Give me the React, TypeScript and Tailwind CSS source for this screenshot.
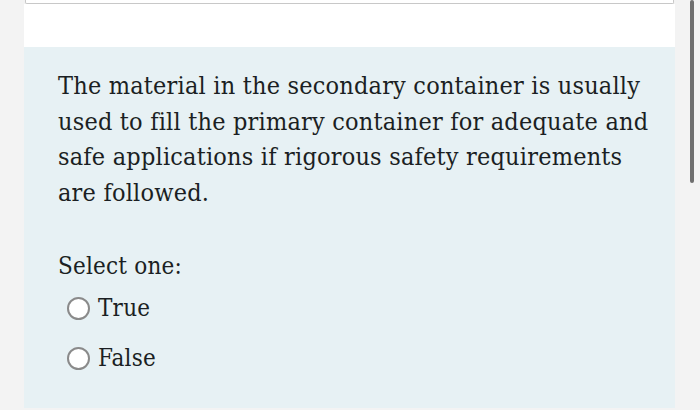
import React from "react";

export default function App() {
  const font = { fontFamily: '"DejaVu Serif Condensed", "DejaVu Serif", serif' };
  return (
    <div className="relative w-[700px] h-[410px] overflow-hidden bg-[#f3f3f3]" style={font}>
      <div className="ml-[24px] w-[651px] flex flex-col h-[408px]">
        <div className="h-[4px] mx-[1px] border border-t-0 border-[#c8c8c8] bg-white rounded-b-[2px]" />
        <div className="h-[43px] bg-white" />
        <div className="flex-1 bg-[#e7f1f4] pl-[34px] pr-[10px] pt-[21px] text-[#1b1f23]">
          <p className="text-[25px] leading-[35.5px] tracking-[0.2px]">
            The material in the secondary container is usually used to fill the primary container for adequate and safe applications if rigorous safety requirements are followed.
          </p>
          <p className="mt-[38px] text-[24px] leading-[36px] tracking-[0.2px]">Select one:</p>
          <div className="mt-[6px] flex flex-col gap-[14px] pl-[9px]">
            {["True", "False"].map((t) => (
              <label key={t} className="flex items-center gap-[8px] text-[24px] leading-[36px] tracking-[0.2px]">
                <span className="w-[23px] h-[23px] rounded-full border-2 border-[#8a8a8a] bg-white" />
                <span>{t}</span>
              </label>
            ))}
          </div>
        </div>
      </div>
      <div className="absolute left-[690px] top-0 w-[4px] h-[183px] rounded-full bg-[#6f6f6f]" />
    </div>
  );
}
